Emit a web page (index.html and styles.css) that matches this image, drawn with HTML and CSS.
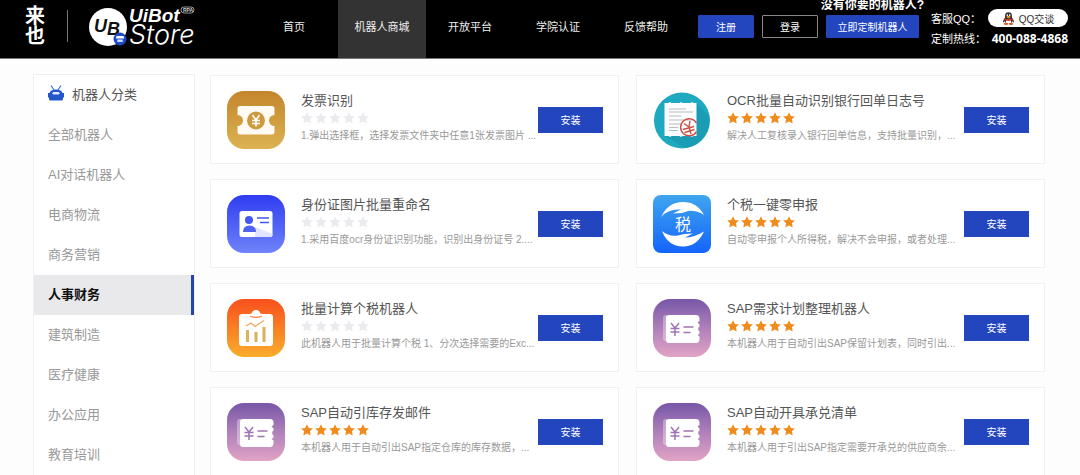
FILE: index.html
```html
<!DOCTYPE html>
<html lang="zh-CN">
<head>
    <meta charset="UTF-8">
    <meta name="viewport" content="width=device-width, initial-scale=1.0">
    <title>UiBot Store</title>
    <link rel="stylesheet" href="styles.css">
</head>
<body>
    <!-- shared shapes -->
    <svg class="defs" width="0" height="0" aria-hidden="true">
        <defs>
            <linearGradient id="gold" x1="0" y1="0" x2="0" y2="1"><stop offset="0" stop-color="#c3852b"/><stop offset="1" stop-color="#dcb352"/></linearGradient>
            <linearGradient id="indigo" x1="0" y1="0" x2="0" y2="1"><stop offset="0" stop-color="#2f3df0"/><stop offset="1" stop-color="#6f83fa"/></linearGradient>
            <linearGradient id="orange" x1="0" y1="0" x2="0" y2="1"><stop offset="0" stop-color="#f8501c"/><stop offset="1" stop-color="#f9ad2b"/></linearGradient>
            <linearGradient id="sky" x1="0" y1="0" x2="0" y2="1"><stop offset="0" stop-color="#3fa6ee"/><stop offset="1" stop-color="#1464fb"/></linearGradient>
            <linearGradient id="purple" x1="0" y1="0" x2="0" y2="1"><stop offset="0" stop-color="#7857a8"/><stop offset="0.5" stop-color="#ae80ba"/><stop offset="1" stop-color="#e2a3c5"/></linearGradient>
            <symbol id="star" viewBox="0 0 12 12"><path d="M6 .2l1.800 3.700 4.100.5-3 2.800.8 4.200L6 9.400l-3.700 2 .8-4.200-3-2.800 4.100-.5z"/></symbol>
            <symbol id="sap" viewBox="0 0 58 58">
                <rect width="58" height="58" rx="17" fill="url(#purple)"/>
                <path d="M14 16h-1.500q-2.500 0-2.500 3v20q0 3 2.500 3H14z" fill="#fff" opacity=".35"/>
                <path d="M16 16h27q3.500 0 3.500 3.500v2.500l-2 1.500 2 2v2a3 3 0 0 0 0 5v2l-2 1.500 2 1.500v3q-.5 3.500-3.500 3.500H16q-3 0-3-3V19q0-3 3-3z" fill="#fff"/>
                <path d="M18 24l4 5 4-5M22 29v8M17.500 29.500h9M17.500 33h9" fill="none" stroke="#a074b3" stroke-width="1.500"/>
                <path d="M30.500 28h10M30.500 33.500h7" stroke="#a074b3" stroke-width="1.600"/>
            </symbol>
        </defs>
    </svg>

    <header class="header">
        <a class="logo" href="#" aria-label="来也 UiBot Store">
            <span class="laiye">来也</span>
            <span class="divider"></span>
            <svg class="uibot" viewBox="0 0 120 48" width="120" height="48">
                <circle cx="19" cy="21" r="19" fill="#fff"/>
                <text class="mark" x="5" y="26">U<tspan dy="3">B</tspan></text>
                <circle cx="31" cy="33" r="6.500" fill="#1f49c8"/>
                <path d="M27.500 30h7l.7 2.500h-8.400z" fill="#fff"/>
                <path d="M28.300 33.500h5.400v2.500h-5.400z" fill="#cfdcff"/>
                <text class="name" x="40" y="16">UiBot</text>
                <rect x="92" y="1" width="13" height="6" rx="3" fill="none" stroke="#bbb" stroke-width=".8"/>
                <text class="rpa" x="94" y="6">RPA</text>
                <text class="store" x="40" y="38">Store</text>
            </svg>
        </a>
        <nav class="nav">
            <a href="#">首页</a>
            <a href="#" class="active">机器人商城</a>
            <a href="#">开放平台</a>
            <a href="#">学院认证</a>
            <a href="#">反馈帮助</a>
        </nav>
        <div class="actions">
            <button class="btn">注册</button>
            <button class="btn outline">登录</button>
            <div class="custom">
                <span class="tip">没有你要的机器人?</span>
                <button class="btn wide">立即定制机器人</button>
            </div>
        </div>
        <div class="contact">
            <div class="row">
                <span>客服QQ：</span>
                <a class="qq" href="#">
                    <svg viewBox="0 0 14 14" width="13" height="13">
                        <path d="M3 6.500Q.8 9 1 11.500l2-1.500M11 6.500q2.200 2.500 2 5l-2-1.500" fill="#222"/>
                        <ellipse cx="7" cy="8" rx="4.300" ry="5" fill="#222"/>
                        <circle cx="7" cy="4" r="3.700" fill="#333"/>
                        <ellipse cx="7" cy="10" rx="2.800" ry="2.800" fill="#fff"/>
                        <circle cx="5.700" cy="3.300" r=".9" fill="#fff"/>
                        <circle cx="8.300" cy="3.300" r=".9" fill="#fff"/>
                        <ellipse cx="7" cy="5.300" rx="2.200" ry=".9" fill="#f6a623"/>
                        <path d="M2.600 6.600q4.400 2 8.800 0v2q-4.400 2-8.800 0z" fill="#d9362b"/>
                        <ellipse cx="4.300" cy="12.800" rx="2.500" ry="1.100" fill="#d9622b"/>
                        <ellipse cx="9.700" cy="12.800" rx="2.500" ry="1.100" fill="#d9622b"/>
                    </svg>
                    QQ交谈
                </a>
            </div>
            <div class="row">
                <span>定制热线：</span>
                <strong>400-088-4868</strong>
            </div>
        </div>
    </header>

    <div class="container">
        <aside class="sidebar">
            <h2>
                <svg viewBox="0 0 16 16" width="16" height="16">
                    <path d="M3 .5l3 4.500M13 .5L10 5" stroke="#4a78c8" stroke-width="1.300"/>
                    <path d="M1.500 8Q2.500 4.500 8 4.500T14.500 8H16v4.500h-1v1.500q0 1.500-1.500 1.500h-11Q1 15.500 1 14v-1.500H0V8z" fill="#2457cc"/>
                    <rect x="4.500" y="7" width="7" height="2.500" rx="1.200" fill="#dfe9ff"/>
                </svg>
                机器人分类
            </h2>
            <ul>
                <li><a href="#">全部机器人</a></li>
                <li><a href="#">AI对话机器人</a></li>
                <li><a href="#">电商物流</a></li>
                <li><a href="#">商务营销</a></li>
                <li><a href="#" class="active">人事财务</a></li>
                <li><a href="#">建筑制造</a></li>
                <li><a href="#">医疗健康</a></li>
                <li><a href="#">办公应用</a></li>
                <li><a href="#">教育培训</a></li>
            </ul>
        </aside>

        <main class="list">
            <div class="card">
                <svg class="icon" viewBox="0 0 58 58">
                    <rect width="58" height="58" rx="17" fill="url(#gold)"/>
                    <path d="M13 15h32q2.500 0 2.500 2.500V24a5.500 5.500 0 0 0 0 11v6q0 2.500-2.500 2.500H13q-2.500 0-2.500-2.500v-6a5.500 5.500 0 0 0 0-11v-6.500Q10.500 15 13 15z" fill="#fffaf2"/>
                    <circle cx="29" cy="29.500" r="9" fill="#cf9a3d"/>
                    <path d="M25.500 24l3.500 5 3.500-5M29 29v6.500M25 29.500h8M25 32.500h8" fill="none" stroke="#fff" stroke-width="1.600"/>
                </svg>
                <div class="info">
                    <h3>发票识别</h3>
                    <div class="stars"><svg><use href="#star"/></svg><svg><use href="#star"/></svg><svg><use href="#star"/></svg><svg><use href="#star"/></svg><svg><use href="#star"/></svg></div>
                    <p>1.弹出选择框，选择发票文件夹中任意1张发票图片 ...</p>
                </div>
                <button class="install">安装</button>
            </div>
            <div class="card">
                <svg class="icon" viewBox="0 0 58 58">
                    <circle cx="29" cy="29.500" r="28" fill="#1fa9bf"/>
                    <path d="M44 13l12 12a28 28 0 0 1-24 32L12 45z" fill="#1a9db4"/>
                    <path d="M11.500 12h4l1.500-1 1.500 1h8l1.500-1 1.500 1h8l1.500-1 1.500 1h3v33h-3l-1.500 1-1.500-1h-8l-1.500 1-1.500-1h-8L17 46l-1.500-1h-4z" fill="#fafcfd"/>
                    <path d="M16 18h17M16 21h24M16 25h12M16 29h23M16 33h12M16 36.500h9M16 39.500h9" stroke="#b9bcc0" stroke-width="1"/>
                    <path d="M43.500 40.500A8.500 8.500 0 1 1 43.500 32" fill="none" stroke="#cf5146" stroke-width="1.500"/>
                    <path d="M31 32.500l5 3.500 1-6M36 36l2 7M30 38.500l11-3M31.500 41.500l10-3" fill="none" stroke="#cf5146" stroke-width="1.400"/>
                </svg>
                <div class="info">
                    <h3>OCR批量自动识别银行回单日志号</h3>
                    <div class="stars on"><svg><use href="#star"/></svg><svg><use href="#star"/></svg><svg><use href="#star"/></svg><svg><use href="#star"/></svg><svg><use href="#star"/></svg></div>
                    <p>解决人工复核录入银行回单信息，支持批量识别，...</p>
                </div>
                <button class="install">安装</button>
            </div>
            <div class="card">
                <svg class="icon" viewBox="0 0 58 58">
                    <rect width="58" height="58" rx="17" fill="url(#indigo)"/>
                    <rect x="12.500" y="16" width="33" height="26" rx="2.500" fill="#fff"/>
                    <path d="M28 32l17.500 7v.5q0 2.500-2.500 2.500H28z" fill="#dfe4ff"/>
                    <circle cx="22" cy="25" r="4" fill="#4556ef"/>
                    <path d="M16 37q0-6.500 6.500-6.500T29 37z" fill="#4f62f2"/>
                    <path d="M30 23h12M33 27.500h9" stroke="#4556ef" stroke-width="1.500"/>
                </svg>
                <div class="info">
                    <h3>身份证图片批量重命名</h3>
                    <div class="stars"><svg><use href="#star"/></svg><svg><use href="#star"/></svg><svg><use href="#star"/></svg><svg><use href="#star"/></svg><svg><use href="#star"/></svg></div>
                    <p>1.采用百度ocr身份证识别功能，识别出身份证号 2....</p>
                </div>
                <button class="install">安装</button>
            </div>
            <div class="card">
                <svg class="icon" viewBox="0 0 58 58">
                    <rect width="58" height="58" rx="8" fill="url(#sky)"/>
                    <path d="M8 22Q15 7 30 7q14 0 21 13-8-5-16-4l-6 2-9 .5 8-4q-13-1-20 7.500z" fill="#fff"/>
                    <path d="M9 36q7 6 16 4.500l6-1.500 9-.5-8 4q9 0 19-6-7 15-21 15Q15 51.500 9 36z" fill="#fff"/>
                    <text class="tax" x="30" y="35">税</text>
                </svg>
                <div class="info">
                    <h3>个税一键零申报</h3>
                    <div class="stars on"><svg><use href="#star"/></svg><svg><use href="#star"/></svg><svg><use href="#star"/></svg><svg><use href="#star"/></svg><svg><use href="#star"/></svg></div>
                    <p>自动零申报个人所得税，解决不会申报，或者处理...</p>
                </div>
                <button class="install">安装</button>
            </div>
            <div class="card">
                <svg class="icon" viewBox="0 0 58 58">
                    <rect width="58" height="58" rx="17" fill="url(#orange)"/>
                    <rect x="12" y="15" width="34" height="32" rx="3" fill="#fff"/>
                    <path d="M20 19q0-4 4.500-4.500 1-3.500 4.500-3.500t4.500 3.500Q38 15 38 19z" fill="#fff"/>
                    <path d="M23 17q6 3 12 0" fill="none" stroke="#f98a4a" stroke-width="1.300"/>
                    <path d="M19 27l5-3 4 3.500 9-6" fill="none" stroke="#eda65b" stroke-width="1.200"/>
                    <path d="M20.500 43V31M29 43V33M37 43V28" stroke="#dcb05c" stroke-width="3"/>
                </svg>
                <div class="info">
                    <h3>批量计算个税机器人</h3>
                    <div class="stars"><svg><use href="#star"/></svg><svg><use href="#star"/></svg><svg><use href="#star"/></svg><svg><use href="#star"/></svg><svg><use href="#star"/></svg></div>
                    <p>此机器人用于批量计算个税 1、分次选择需要的Exc...</p>
                </div>
                <button class="install">安装</button>
            </div>
            <div class="card">
                <svg class="icon"><use href="#sap"/></svg>
                <div class="info">
                    <h3>SAP需求计划整理机器人</h3>
                    <div class="stars on"><svg><use href="#star"/></svg><svg><use href="#star"/></svg><svg><use href="#star"/></svg><svg><use href="#star"/></svg><svg><use href="#star"/></svg></div>
                    <p>本机器人用于自动引出SAP保留计划表，同时引出...</p>
                </div>
                <button class="install">安装</button>
            </div>
            <div class="card">
                <svg class="icon"><use href="#sap"/></svg>
                <div class="info">
                    <h3>SAP自动引库存发邮件</h3>
                    <div class="stars on"><svg><use href="#star"/></svg><svg><use href="#star"/></svg><svg><use href="#star"/></svg><svg><use href="#star"/></svg><svg><use href="#star"/></svg></div>
                    <p>本机器人用于自动引出SAP指定仓库的库存数据，...</p>
                </div>
                <button class="install">安装</button>
            </div>
            <div class="card">
                <svg class="icon"><use href="#sap"/></svg>
                <div class="info">
                    <h3>SAP自动开具承兑清单</h3>
                    <div class="stars on"><svg><use href="#star"/></svg><svg><use href="#star"/></svg><svg><use href="#star"/></svg><svg><use href="#star"/></svg><svg><use href="#star"/></svg></div>
                    <p>本机器人用于引出SAP指定需要开承兑的供应商余...</p>
                </div>
                <button class="install">安装</button>
            </div>
        </main>
    </div>
</body>
</html>
```

FILE: styles.css
```css
* {
    box-sizing: border-box;
}
body {
    font-family: "Liberation Sans", "Noto Sans CJK SC", sans-serif;
    background-color: #fdfdfe;
    margin: 0;
    color: #555;
}
a {
    text-decoration: none;
}
button {
    font-family: inherit;
    cursor: pointer;
}
.defs {
    position: absolute;
}

/* header */
.header {
    display: flex;
    align-items: stretch;
    height: 59px;
    padding-right: 12px;
    background: #000;
    border-bottom: 1px solid #777;
    color: #fff;
    overflow: hidden;
}
.logo {
    display: flex;
    align-items: flex-start;
    width: 250px;
    flex-shrink: 0;
    padding: 6px 0 0 25px;
    color: #fff;
}
.laiye {
    width: 20px;
    font-size: 20px;
    line-height: 20px;
    font-weight: bold;
    word-break: break-all;
}
.divider {
    width: 1px;
    height: 32px;
    margin: 4px 21px 0 22px;
    background: #777;
}
.mark {
    font: italic bold 18px "Liberation Sans", sans-serif;
    fill: #111;
}
.name {
    font: italic bold 19px "Liberation Sans", sans-serif;
    fill: #fff;
}
.rpa {
    font: bold 5px "Liberation Sans", sans-serif;
    fill: #ccc;
}
.store {
    font: italic 300 27px Inter, sans-serif;
    fill: #fff;
}
.nav {
    display: flex;
}
.nav a {
    width: 88px;
    line-height: 54px;
    text-align: center;
    font-size: 11px;
    color: #eee;
}
.nav a.active {
    background: #333;
}
.actions {
    display: flex;
    align-items: flex-start;
    gap: 8px;
    margin-left: auto;
    padding-top: 15px;
}
.btn {
    display: block;
    width: 56px;
    height: 23px;
    padding: 0;
    font-size: 10px;
    color: #fff;
    background: #2346bf;
    border: 1px solid #2346bf;
    border-radius: 1px;
}
.btn.outline {
    background: #000;
    border-color: #888;
}
.btn.wide {
    width: 93px;
}
.custom {
    position: relative;
}
/* hint above the button, runs off the top of the bar */
.tip {
    position: absolute;
    bottom: 100%;
    left: -8px;
    right: -8px;
    margin-bottom: 2px;
    text-align: center;
    white-space: nowrap;
    font-size: 12px;
    line-height: 16px;
    font-weight: bold;
}
.contact {
    margin-left: 12px;
    padding-top: 8px;
    font-size: 11px;
}
.contact .row {
    display: flex;
    align-items: center;
    justify-content: space-between;
    width: 137px;
    height: 20px;
    white-space: nowrap;
}
.contact strong {
    font-family: "Noto Sans", sans-serif;
    font-size: 12px;
}
.qq {
    display: flex;
    align-items: center;
    justify-content: center;
    gap: 4px;
    width: 80px;
    height: 18px;
    border-radius: 9px;
    background: #fff;
    color: #333;
    font-size: 10px;
}

/* content */
.container {
    display: flex;
    gap: 15px;
    padding: 15px 35px 0 33px;
}
.sidebar {
    width: 162px;
    flex-shrink: 0;
    background: #fff;
    border: 1px solid #eeeff5;
}
.sidebar h2 {
    display: flex;
    align-items: center;
    gap: 8px;
    height: 40px;
    margin: 0;
    padding: 0 0 4px 14px;
    font-size: 13px;
    font-weight: normal;
}
.sidebar ul {
    list-style: none;
    margin: 0;
    padding: 0;
}
.sidebar li a {
    display: block;
    line-height: 40px;
    padding-left: 14px;
    font-size: 13px;
    color: #999;
}
.sidebar li a.active {
    background: #e9e9eb;
    border-right: 3px solid #2346a8;
    color: #111;
    font-weight: bold;
}
.list {
    flex: 1;
    min-width: 0;
    display: grid;
    grid-template-columns: 1fr 1fr;
    gap: 15px 17px;
    align-content: start;
    padding-top: 1px;
}
.card {
    display: flex;
    align-items: center;
    min-width: 0;
    height: 89px;
    padding: 0 15px 0 16px;
    background: #fff;
    border: 1px solid #f0f1f6;
}
.icon {
    width: 58px;
    height: 58px;
    flex-shrink: 0;
}
.info {
    flex: 1;
    min-width: 0;
    padding: 0 0 4px 16px;
}
.info h3 {
    margin: 0 0 1px;
    font-size: 13px;
    line-height: 20px;
    font-weight: normal;
    white-space: nowrap;
}
.info p {
    margin: 4px 0 0;
    font-size: 10px;
    line-height: 16px;
    color: #999;
    white-space: nowrap;
}
.stars {
    display: flex;
    gap: 2px;
    fill: #eaebef;
}
.stars.on {
    fill: #f08c1e;
}
.stars svg {
    width: 12px;
    height: 12px;
}
.install {
    width: 65px;
    height: 26px;
    flex-shrink: 0;
    padding: 0;
    border: 0;
    background: #2346bf;
    color: #fff;
    font-size: 10px;
}
.tax {
    font: 16px "Noto Sans CJK SC", sans-serif;
    fill: #fff;
    text-anchor: middle;
}
```
